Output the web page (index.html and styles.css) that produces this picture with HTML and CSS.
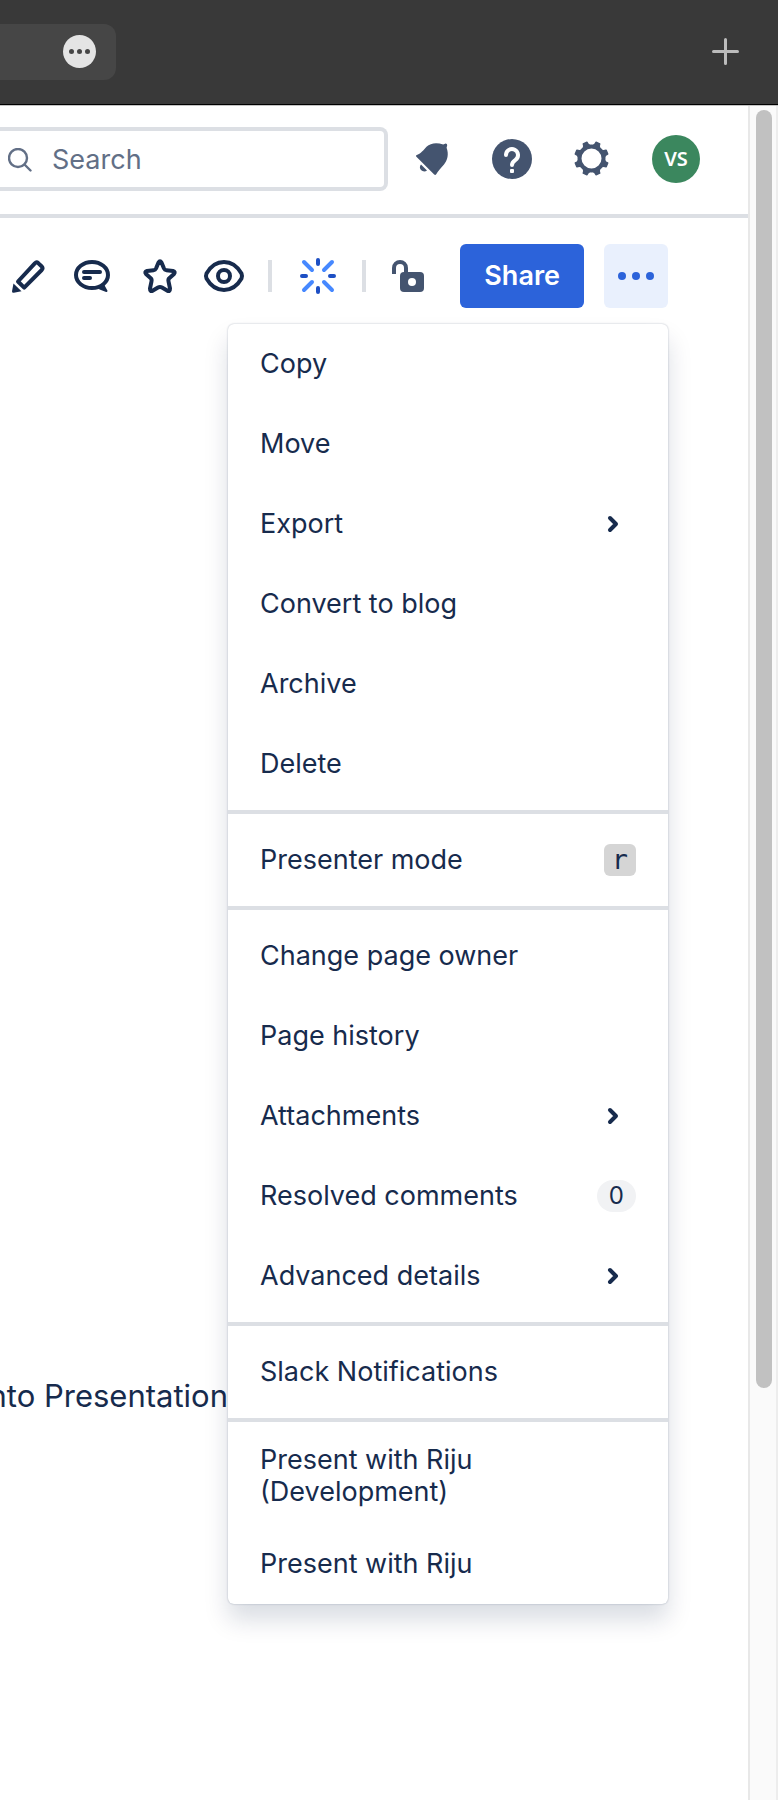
FILE: index.html
```
<!DOCTYPE html>
<html lang="en">

<head>
    <meta charset="UTF-8">
    <meta name="viewport" content="width=device-width, initial-scale=1.0">
    <title>Presentation</title>
    <link rel="stylesheet" href="styles.css">
</head>

<body>
    <div class="tabbar">
        <div class="tab">
            <button class="tab-more" aria-label="Tab options">
                <svg width="33" height="33" viewBox="0 0 33 33">
                    <circle cx="16.5" cy="16.5" r="16.5" fill="#e4e4e4" />
                    <g fill="#464646">
                        <circle cx="8.5" cy="16.5" r="2.5" />
                        <circle cx="16.5" cy="16.5" r="2.5" />
                        <circle cx="24.5" cy="16.5" r="2.5" />
                    </g>
                </svg>
            </button>
        </div>
        <button class="tab-new" aria-label="New tab">
            <svg width="27" height="27" viewBox="0 0 27 27" fill="none" stroke="#bcbcbc" stroke-width="3" stroke-linecap="round">
                <path d="M13.5 1.5v24M1.5 13.5h24" />
            </svg>
        </button>
    </div>

    <div class="window">
        <div class="page">
            <header class="header">
                <label class="search">
                    <svg width="24" height="24" viewBox="0 0 24 24" fill="none" stroke="#626f86" stroke-width="2.4" stroke-linecap="round">
                        <circle cx="10" cy="10" r="9" />
                        <path d="M16.5 16.5l6 6" />
                    </svg>
                    <input type="text" placeholder="Search" aria-label="Search">
                </label>
                <nav class="header-icons">
                    <button aria-label="Notifications">
                        <svg class="icon" viewBox="0 0 48 48" fill="#44546f">
                            <path d="M8.3 20.3C13 18.7 15.5 15 18.5 11.8C22.5 8 28.5 7 35.2 9.5L37.7 8.6Q39.3 8.7 39.2 10.3L38.600 12.7C41 19.5 39.5 25 36 29.5C32.5 33.5 30 36 28.2 39.3Q27.3 40.5 26.2 39.5L8.4 21.8Q7.5 20.8 8.3 20.3Z" />
                            <path d="M13 29.5L19 35.5C17 37 14.5 36.5 13 35C11.5 33.5 11.5 31 13 29.5Z" />
                        </svg>
                    </button>
                    <button aria-label="Help">
                        <svg class="icon" viewBox="0 0 48 48" fill="none">
                            <circle cx="24" cy="24" r="20" fill="#44546f" />
                            <path d="M18 20a6 6 0 1 1 9.5 4.9C25.5 26.3 24 27.2 24 30" stroke="#fff" stroke-width="4" stroke-linecap="round" />
                            <rect x="22" y="34" width="4" height="4" rx="1" fill="#fff" />
                        </svg>
                    </button>
                    <button aria-label="Settings">
                        <svg class="icon" viewBox="0 0 48 48" stroke="#44546f">
                            <circle cx="23.5" cy="23.5" r="12" fill="none" stroke-width="4" />
                            <g fill="#44546f" stroke-width="1.500" stroke-linejoin="round">
                                <path d="M20 10.800Q21.500 9.500 21.500 6.800h4Q25.500 9.500 27 10.800z" transform="rotate(22.5 23.5 23.5)" />
                                <path d="M20 10.800Q21.500 9.500 21.500 6.800h4Q25.500 9.500 27 10.800z" transform="rotate(67.5 23.5 23.5)" />
                                <path d="M20 10.800Q21.500 9.500 21.500 6.800h4Q25.500 9.500 27 10.800z" transform="rotate(112.5 23.5 23.5)" />
                                <path d="M20 10.800Q21.500 9.500 21.500 6.800h4Q25.500 9.500 27 10.800z" transform="rotate(157.5 23.5 23.5)" />
                                <path d="M20 10.800Q21.500 9.500 21.500 6.800h4Q25.500 9.500 27 10.800z" transform="rotate(202.5 23.5 23.5)" />
                                <path d="M20 10.800Q21.500 9.500 21.500 6.800h4Q25.500 9.500 27 10.800z" transform="rotate(247.5 23.5 23.5)" />
                                <path d="M20 10.800Q21.500 9.500 21.500 6.800h4Q25.500 9.500 27 10.800z" transform="rotate(292.5 23.5 23.5)" />
                                <path d="M20 10.800Q21.500 9.500 21.500 6.800h4Q25.500 9.500 27 10.800z" transform="rotate(337.5 23.5 23.5)" />
                            </g>
                        </svg>
                    </button>
                    <button class="avatar">VS</button>
                </nav>
            </header>

            <div class="toolbar">
                <button aria-label="Edit">
                    <svg class="icon" viewBox="0 0 48 48" fill="none">
                        <path d="M14 29.5L30.8 11.3Q32.5 9.6 34.2 11.1L37.8 14.5Q39.3 16.2 37.7 18L20.2 35.7Z" stroke="#172b4d" stroke-width="4" stroke-linejoin="round" />
                        <path d="M9.5 31.5L17.5 39.2L9.8 40.8Q7.9 41 8 39.2Z" fill="#172b4d" />
                    </svg>
                </button>
                <button aria-label="Comments">
                    <svg class="icon" viewBox="0 0 48 48" fill="none" stroke="#172b4d" stroke-width="4" stroke-linecap="round">
                        <ellipse cx="24" cy="23" rx="16" ry="13" />
                        <path d="M16 20h16M16 26h6" />
                        <path d="M32 36.5L38.5 39L35.5 33.5Z" stroke-width="2" stroke-linejoin="round" fill="#172b4d" />
                    </svg>
                </button>
                <button class="star" aria-label="Star">
                    <svg class="icon" viewBox="0 0 48 48" fill="none" stroke="#172b4d" stroke-width="4" stroke-linejoin="round">
                        <path d="M22.5 10.5Q24 8 25.5 10.5L28 16.5Q28.7 18 30.5 18.2L37 19Q39.8 19.8 38 22L33.5 26Q32 27.3 32.5 29.3L34 36.5Q34 39.8 31.5 38.8L26 35.5Q24 34.3 22 35.5L16.5 38.8Q14 39.8 14 36.5L15.5 29.3Q16 27.3 14.5 26L10 22Q8.2 19.8 11 19L17.5 18.2Q19.3 18 20 16.5Z" />
                    </svg>
                </button>
                <button aria-label="Watch">
                    <svg class="icon" viewBox="0 0 48 48" fill="none" stroke="#172b4d" stroke-width="4">
                        <path d="M6.5 21.5C10.5 14.5 16.5 10 24 10S37.5 14.5 41.5 21.5Q42.5 24 41.5 26.5C37.5 33.5 31.5 38 24 38S10.5 33.5 6.5 26.5Q5.5 24 6.5 21.5Z" />
                        <circle cx="24" cy="24" r="6" />
                    </svg>
                </button>
                <span class="divider"></span>
                <button class="summarize" aria-label="Summarize">
                    <svg class="icon" viewBox="0 0 48 48" fill="none" stroke-width="4" stroke-linecap="round">
                        <path d="M24 8v4M24 36v4M8 24h4M36 24h4" stroke="#1d4fc4" />
                        <path d="M10 10l8 8M38 10l-8 8M10 38l8-8M38 38l-8-8" stroke="#4688ff" />
                    </svg>
                </button>
                <span class="divider"></span>
                <button aria-label="Restrictions">
                    <svg class="icon" viewBox="0 0 48 48">
                        <path d="M10 22v-6a6 6 0 0 1 12 0v6" fill="none" stroke="#44546f" stroke-width="4" />
                        <rect x="16" y="20" width="24" height="20" rx="4" fill="#44546f" />
                        <circle cx="28" cy="30" r="4" fill="#fff" />
                    </svg>
                </button>
                <button class="share">Share</button>
                <div class="more">
                    <button class="more-button" aria-label="More actions">
                        <svg class="icon" viewBox="0 0 48 48" fill="#2c63da">
                            <circle cx="10" cy="24" r="4" />
                            <circle cx="24" cy="24" r="4" />
                            <circle cx="38" cy="24" r="4" />
                        </svg>
                    </button>
                    <div class="menu">
                        <div class="menu-group">
                            <button>Copy</button>
                            <button>Move</button>
                            <button>Export
                                <svg class="icon" viewBox="0 0 48 48"><path class="chevron" d="M22 18l6 6-6 6" /></svg>
                            </button>
                            <button>Convert to blog</button>
                            <button>Archive</button>
                            <button>Delete</button>
                        </div>
                        <div class="menu-group">
                            <button>Presenter mode <kbd>r</kbd></button>
                        </div>
                        <div class="menu-group">
                            <button>Change page owner</button>
                            <button>Page history</button>
                            <button>Attachments
                                <svg class="icon" viewBox="0 0 48 48"><path class="chevron" d="M22 18l6 6-6 6" /></svg>
                            </button>
                            <button>Resolved comments <span class="count">0</span></button>
                            <button>Advanced details
                                <svg class="icon" viewBox="0 0 48 48"><path class="chevron" d="M22 18l6 6-6 6" /></svg>
                            </button>
                        </div>
                        <div class="menu-group">
                            <button>Slack Notifications</button>
                        </div>
                        <div class="menu-group apps">
                            <button>Present with Riju (Development)</button>
                            <button>Present with Riju</button>
                        </div>
                    </div>
                </div>
            </div>

            <main class="content">
                <p>nto Presentation</p>
            </main>
        </div>
        <div class="scrollbar">
            <div class="thumb"></div>
        </div>
    </div>
</body>

</html>
```

FILE: styles.css
```
* {
    box-sizing: border-box;
}

body {
    margin: 0;
    min-height: 100vh;
    display: flex;
    flex-direction: column;
    background-color: #fff;
    color: #172b4d;
    font-family: Inter, "Liberation Sans", sans-serif;
    font-size: 27px;
    line-height: 32px;
}

button {
    padding: 0;
    border: none;
    background: none;
    color: inherit;
    font: inherit;
    cursor: pointer;
}

svg {
    display: block;
}

.icon {
    width: 48px;
    height: 48px;
    flex: none;
}

/* browser tabs */
.tabbar {
    display: flex;
    justify-content: space-between;
    align-items: center;
    height: 106px;
    padding: 0 39px 2px 0;
    background-color: #393939;
    border-bottom: 1px solid #c4c4c4;
    box-shadow: inset 0 -1px #000;
}

.tab {
    display: flex;
    align-items: center;
    justify-content: flex-end;
    width: 116px;
    height: 56px;
    padding-right: 20px;
    background-color: #464646;
    border-radius: 0 12px 12px 0;
}

/* page */
.window {
    flex: 1;
    display: flex;
}

.page {
    flex: 1;
    min-width: 0;
}

.header {
    display: flex;
    align-items: center;
    gap: 20px;
    height: 112px;
    padding: 0 48px 2px 0;
    border-bottom: 4px solid #dcdfe4;
}

.search {
    flex: 1;
    min-width: 0;
    display: flex;
    align-items: center;
    gap: 20px;
    height: 64px;
    padding: 2px 0 0 8px;
    border: 4px solid #dcdfe4;
    border-left: none;
    border-radius: 0 8px 8px 0;
}

.search input {
    flex: 1;
    min-width: 0;
    padding: 0;
    border: none;
    outline: none;
    background: none;
    color: #172b4d;
    font: inherit;
}

.search input::placeholder {
    color: #626f86;
    opacity: 1;
}

.header-icons {
    display: flex;
    gap: 32px;
}

.header-icons .avatar {
    width: 48px;
    height: 48px;
    margin-left: 4px;
    border-radius: 50%;
    background-color: #3b875e;
    color: #fff;
    font-family: "Noto Sans", sans-serif;
    font-size: 20px;
    font-weight: 600;
}

.toolbar {
    display: flex;
    align-items: center;
    justify-content: flex-end;
    gap: 20px;
    padding: 26px 80px 0 0;
}

.toolbar > button {
    margin-left: -4px;
}

.toolbar .star {
    margin-left: 0;
}

.divider {
    width: 4px;
    height: 32px;
    background-color: #dcdfe4;
}

.toolbar .divider + button {
    margin-left: -2px;
}

.toolbar .divider + .summarize {
    margin-left: 2px;
}

.toolbar .share {
    height: 64px;
    margin-left: 8px;
    padding: 0 24px;
    border-radius: 6px;
    background-color: #2c63da;
    color: #fff;
    font-weight: 600;
}

.more {
    position: relative;
}

.more-button {
    display: flex;
    align-items: center;
    justify-content: center;
    width: 64px;
    height: 64px;
    border-radius: 6px;
    background-color: #e9f0fd;
}

.menu {
    position: absolute;
    top: 100%;
    right: 0;
    width: 440px;
    margin-top: 16px;
    border-radius: 6px;
    background-color: #fff;
    box-shadow: 0 16px 24px rgba(9, 30, 66, 0.15), 0 0 2px rgba(9, 30, 66, 0.31);
}

.menu-group {
    padding: 6px 0;
}

.menu-group:first-child {
    padding-top: 0;
}

.menu-group + .menu-group {
    border-top: 4px solid #dcdfe4;
}

.menu-group button {
    display: flex;
    align-items: center;
    justify-content: space-between;
    width: 100%;
    min-height: 80px;
    padding: 0 32px;
    text-align: left;
}

.menu-group.apps {
    padding: 2px 0 4px;
}

.menu-group.apps button {
    min-height: 72px;
    padding: 20px 160px 20px 32px;
}

.chevron {
    fill: none;
    stroke: #172b4d;
    stroke-width: 4px;
    stroke-linecap: round;
    stroke-linejoin: round;
}

kbd {
    padding: 0 8px;
    border-radius: 6px;
    background-color: #d5d5d5;
    font-family: "DejaVu Sans Mono", monospace;
    font-size: 27px;
}

.count {
    padding: 0 12px;
    border-radius: 16px;
    background-color: #f1f2f4;
    font-size: 24px;
}

.content {
    display: flex;
    justify-content: flex-end;
    width: 228px;
    padding-top: 1072px;
    overflow: hidden;
    font-size: 31px;
    white-space: nowrap;
}

.content p {
    margin: 0;
}

.scrollbar {
    width: 30px;
    padding: 4px 4px 0 6px;
    border-left: 2px solid #e8e8e8;
    border-right: 2px solid #ededed;
    background-color: #fafafa;
}

.thumb {
    height: 1278px;
    border-radius: 8px;
    background-color: #c1c1c1;
}
```
